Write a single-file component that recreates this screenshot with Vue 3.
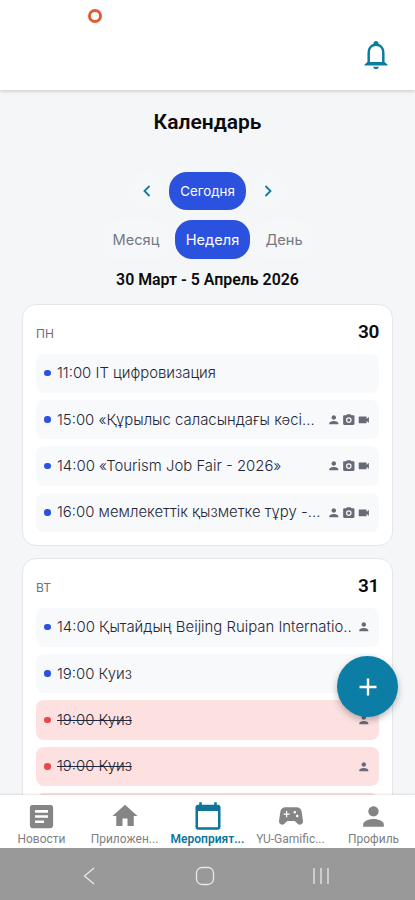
<script setup>
const icons = {
  person: 'M12 12c2.21 0 4-1.79 4-4s-1.79-4-4-4-4 1.79-4 4 1.79 4 4 4zm0 2c-2.67 0-8 1.34-8 4v2h16v-2c0-2.66-5.33-4-8-4z',
  camera: 'M20 4h-3.17L15 2H9L7.17 4H4C2.9 4 2 4.900 2 6v13c0 1.100.9 2 2 2h16c1.100 0 2-.9 2-2V6c0-1.100-.9-2-2-2zm-8 13.500a5 5 0 1 1 0-10 5 5 0 0 1 0 10zm0-2.200a2.800 2.800 0 1 0 0-5.600 2.800 2.800 0 0 0 0 5.600z',
  video: 'M17 10.5V7c0-.55-.45-1-1-1H4c-.55 0-1 .45-1 1v10c0 .55.45 1 1 1h12c.55 0 1-.45 1-1v-3.500l4 4v-11l-4 4z',
  news: 'M19 3H5c-1.100 0-2 .9-2 2v14c0 1.100.9 2 2 2h14c1.100 0 2-.9 2-2V5c0-1.100-.9-2-2-2zm-5 14H7v-2h7v2zm3-4H7v-2h10v2zm0-4H7V7h10v2z',
  home: 'M10 20v-6h4v6h5v-8h3L12 3 2 12h3v8z',
  calendar: 'M20 3h-1V1h-2v2H7V1H5v2H4c-1.100 0-2 .9-2 2v16c0 1.100.9 2 2 2h16c1.100 0 2-.9 2-2V5c0-1.100-.9-2-2-2zm0 18H4V8h16v13z',
  game: 'M21.580 16.090l-1.090-7.660C20.210 6.460 18.520 5 16.530 5H7.470C5.480 5 3.790 6.460 3.510 8.430l-1.090 7.660C2.200 17.630 3.390 19 4.940 19c.68 0 1.320-.27 1.800-.75L9 16h6l2.250 2.250c.48.48 1.130.75 1.800.75 1.560 0 2.750-1.370 2.530-2.910zM11 11H9v2H8v-2H6v-1h2V8h1v2h2v1zm4-1c-.55 0-1-.45-1-1s.45-1 1-1 1 .45 1 1-.45 1-1 1zm2 3c-.55 0-1-.45-1-1s.45-1 1-1 1 .45 1 1-.45 1-1 1z',
}

const all = ['person', 'camera', 'video']
const days = [
  {
    name: 'ПН',
    date: 30,
    events: [
      { text: '11:00 IT цифровизация', icons: [] },
      { text: '15:00 «Құрылыс саласындағы кәсі...', icons: all },
      { text: '14:00 «Tourism Job Fair - 2026»', icons: all },
      { text: '16:00 мемлекеттік қызметке тұру -...', icons: all },
    ],
  },
  {
    name: 'ВТ',
    date: 31,
    events: [
      { text: '14:00 Қытайдың Beijing Ruipan Internatio..', icons: ['person'] },
      { text: '19:00 Куиз', icons: [] },
      { text: '19:00 Куиз', icons: ['person'], cancelled: true },
      { text: '19:00 Куиз', icons: ['person'], cancelled: true },
      { text: '', icons: [], cancelled: true },
    ],
  },
]

const tabs = [
  { label: 'Новости', icon: 'news', size: 31 },
  { label: 'Приложен...', icon: 'home', size: 30 },
  { label: 'Мероприят...', icon: 'calendar', size: 30, active: true },
  { label: 'YU-Gamific...', icon: 'game', size: 30 },
  { label: 'Профиль', icon: 'person', size: 31 },
]
</script>

<template>
  <div class="screen">
    <header class="top">
      <span class="ring"></span>
      <svg class="bell" viewBox="0 0 28 32">
        <circle cx="14" cy="4.500" r="2.500" fill="#0c7c9f" />
        <path d="M6.700 25V13.700C6.700 8.600 9.800 5.700 14 5.700s7.300 2.900 7.300 8V25" fill="none" stroke="#0c7c9f" stroke-width="2.500" />
        <path d="M2.500 26.400v-1l3-2.400h17l3 2.400v1z" fill="#0c7c9f" />
        <path d="M11 27.800h6c-.5 1.700-1.600 2.400-3 2.400s-2.500-.7-3-2.400z" fill="#0c7c9f" />
      </svg>
    </header>

    <main class="content">
      <h1>Календарь</h1>
      <div class="row nav">
        <button class="arrow"><svg viewBox="0 0 10 12"><path d="M7.500 1 2.500 6l5 5" /></svg></button>
        <button class="today">Сегодня</button>
        <button class="arrow"><svg viewBox="0 0 10 12"><path d="M2.500 1l5 5-5 5" /></svg></button>
      </div>
      <div class="row modes">
        <button class="month">Месяц</button>
        <button class="week">Неделя</button>
        <button class="day-mode">День</button>
      </div>
      <div class="range">30 Март - 5 Апрель 2026</div>

      <section v-for="d in days" :key="d.date" class="card">
        <div class="card-head">
          <span class="dow">{{ d.name }}</span>
          <span class="num">{{ d.date }}</span>
        </div>
        <div class="events">
          <div v-for="(e, i) in d.events" :key="i" class="event" :class="{ cancelled: e.cancelled }">
            <span class="dot"></span>
            <span class="text">{{ e.text }}</span>
            <span class="marks">
              <svg v-for="n in e.icons" :key="n" viewBox="0 0 24 24"><path :d="icons[n]" fill-rule="evenodd" /></svg>
            </span>
          </div>
        </div>
      </section>
    </main>

    <button class="fab"><svg viewBox="0 0 20 20"><path d="M10 1.500v17M1.500 10h17" /></svg></button>

    <nav class="tabs">
      <div v-for="t in tabs" :key="t.label" class="tab" :class="{ active: t.active }">
        <span class="tab-icon">
          <svg :width="t.size" :height="t.size" viewBox="0 0 24 24"><path :d="icons[t.icon]" /></svg>
        </span>
        <span class="tab-label">{{ t.label }}</span>
      </div>
    </nav>
    <footer class="system">
      <svg viewBox="0 0 12 18" width="12" height="18"><path d="M11 1 1.500 9l9.500 8" /></svg>
      <svg viewBox="0 0 20 20" width="20" height="20"><rect x="1.500" y="1.500" width="17" height="17" rx="5.500" /></svg>
      <svg viewBox="0 0 18 18" width="18" height="18"><path d="M2 1v16M9 1v16M16 1v16" /></svg>
    </footer>
  </div>
</template>

<style>
body { overflow: hidden; }
</style>

<style scoped>
.screen {
  position: relative;
  width: 415px;
  height: 900px;
  display: flex;
  flex-direction: column;
  overflow: hidden;
  background: #f5f6f8;
  font-family: Inter, sans-serif;
}
button { border: 0; padding: 0; font-family: inherit; }
.top {
  flex: none;
  height: 90px;
  box-sizing: border-box;
  background: #fff;
  box-shadow: 0 1px 4px rgba(0, 0, 0, 0.2);
  display: flex;
  justify-content: space-between;
  padding: 9px 25px 0 87px;
  z-index: 1;
}
.ring { width: 14px; height: 14px; box-sizing: border-box; border: 3px solid #e25a30; border-radius: 50%; margin-left: 0.500px; }
.bell { width: 28px; height: 32px; margin-top: 30px; }
.content { flex: 1; min-height: 0; overflow: hidden; padding: 0 22px; }
h1 {
  margin: 17px 0 35px;
  height: 30px;
  font: 600 21px/30px Roboto, sans-serif;
  text-align: center;
  color: #0b0b0d;
}
.row { display: flex; justify-content: center; }
.nav { height: 38px; gap: 4px; margin-bottom: 10px; }
.arrow { width: 36px; border-radius: 16px; background: #f6f7f8; }
.arrow svg { width: 10px; height: 12px; vertical-align: middle; margin-bottom: 2px; }
.arrow path { fill: none; stroke: #0c7c9f; stroke-width: 1.800; }
.today, .week { background: #2b51df; color: #fff; border-radius: 18px; }
.today { width: 77px; font-size: 13.300px; }
.modes { height: 39px; gap: 5px; margin-bottom: 9px; }
.modes button { font-size: 14.600px; }
.month, .day-mode { background: #f6f7f8; color: #747983; border-radius: 16px; }
.month { width: 68px; }
.modes .week { width: 75px; border-radius: 17px; }
.day-mode { width: 58px; }
.range { height: 23px; font: 600 15.900px/23px Roboto, sans-serif; text-align: center; color: #0b0b0d; }
.card {
  height: 242px;
  box-sizing: border-box;
  border: 1px solid #e4e6e9;
  border-radius: 14px;
  background: #fff;
  margin-top: 13px;
  padding: 11px 13px 0;
}
.card + .card { height: 300px; margin-top: 12px; }
.card-head { height: 32px; display: flex; justify-content: space-between; align-items: center; margin-bottom: 5.500px; }
.dow { font-size: 12px; color: #6c717b; padding-top: 2px; }
.num { font: 600 19px/24px Roboto, sans-serif; letter-spacing: -0.400px; color: #0b0b0d; }
.events { display: flex; flex-direction: column; gap: 7px; }
.event {
  height: 39.400px;
  box-sizing: border-box;
  border-radius: 8px;
  background: #f8f9fb;
  display: flex;
  align-items: center;
  padding: 0 8.500px 0 8px;
}
.dot { flex: none; width: 6.500px; height: 6.500px; border-radius: 50%; background: #2b51df; margin-right: 6.500px; }
.text { flex: 1; min-width: 0; white-space: nowrap; font-size: 14.900px; font-weight: 300; color: #1f2738; }
.marks { display: flex; gap: 1.500px; }
.marks svg { width: 13.600px; height: 13.600px; fill: #666b77; }
.cancelled { background: #fde1e1; }
.cancelled .dot { background: #e9474c; }
.cancelled .text { text-decoration: line-through; }
.fab {
  position: absolute;
  left: 337px;
  top: 656px;
  width: 61px;
  height: 61px;
  border-radius: 50%;
  background: #0c7da4;
  box-shadow: 0 3px 7px rgba(0, 0, 0, 0.28);
  display: flex;
  align-items: center;
  justify-content: center;
}
.fab svg { width: 20px; height: 20px; }
.fab path { stroke: #fff; stroke-width: 2.400; }
.tabs {
  flex: none;
  height: 53px;
  background: #fff;
  box-shadow: 0 -1px 2px rgba(0, 0, 0, 0.1);
  display: grid;
  grid-template-columns: repeat(5, 83px);
  z-index: 1;
}
.tab { display: flex; flex-direction: column; align-items: center; color: #808080; fill: #858585; }
.tab-icon { height: 36px; padding-top: 6px; box-sizing: border-box; display: flex; align-items: center; }
.tab-label { font: 400 12px/16px Roboto, sans-serif; white-space: nowrap; }
.tab.active { color: #0c7599; fill: #0c7599; }
.tab.active .tab-label { font-weight: 600; }
.system {
  flex: none;
  height: 52px;
  background: #999;
  display: grid;
  grid-template-columns: 178px 54px 178px;
  align-items: center;
  justify-items: center;
  padding-top: 3px;
  box-sizing: border-box;
}
.system svg { fill: none; stroke: #e8e8e8; stroke-width: 1.300; }
</style>
